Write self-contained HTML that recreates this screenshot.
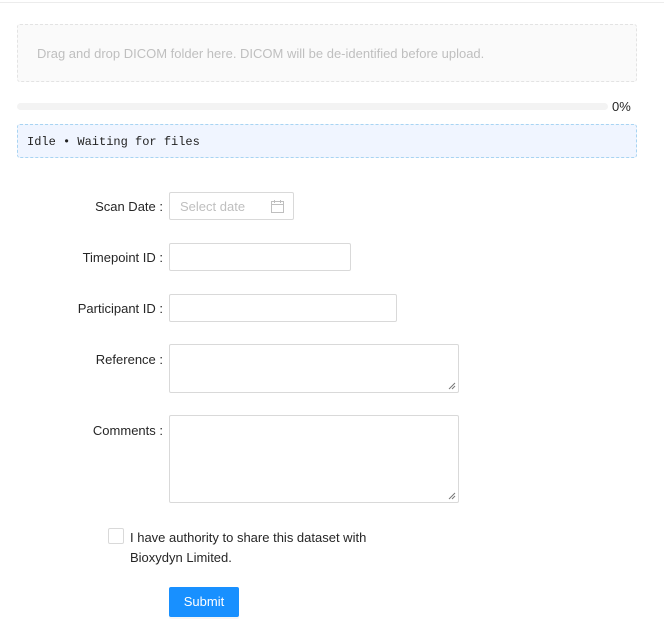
<!DOCTYPE html>
<html><head><meta charset="utf-8"><style>
*{box-sizing:border-box;margin:0;padding:0}
body{width:664px;height:638px;background:#fff;position:relative;font-family:"Liberation Sans",Arial,sans-serif;overflow:hidden}
.a{position:absolute}
.lbl{position:absolute;right:501px;font-size:13px;color:#262626;white-space:nowrap}
.inp{position:absolute;border:1px solid #d9d9d9;border-radius:2px;background:#fff}
.grip{position:absolute;right:2px;bottom:2px}
</style></head><body>
<div class="a" style="left:0;top:2px;width:664px;height:1px;background:#ececec"></div>
<div class="a" style="left:17px;top:24px;width:620px;height:58px;border:1px dashed #e3e3e3;border-radius:3px;background:#fafafa"></div>
<div class="a" style="left:37px;top:46px;font-size:13px;color:#bfbfbf">Drag and drop DICOM folder here. DICOM will be de-identified before upload.</div>
<div class="a" style="left:17px;top:103px;width:591px;height:7px;border-radius:4px;background:#f3f3f3"></div>
<div class="a" style="left:612px;top:99px;font-size:13px;color:#262626">0%</div>
<div class="a" style="left:17px;top:124px;width:620px;height:34px;border:1px dashed #a8d4f2;border-radius:3px;background:#f0f5ff"></div>
<div class="a" style="left:27px;top:135px;font-family:'Liberation Mono',monospace;font-size:12px;color:#222">Idle • Waiting for files</div>

<div class="lbl" style="top:199px">Scan Date :</div>
<div class="inp" style="left:169px;top:192px;width:125px;height:28px"></div>
<div class="a" style="left:180px;top:199px;font-size:13px;color:#bfbfbf">Select date</div>
<svg class="a" style="left:271px;top:200px" width="13" height="13" viewBox="0 0 13 13"><rect x="0.5" y="1.5" width="12" height="11" fill="none" stroke="#bfbfbf"/><line x1="0.5" y1="4.5" x2="12.5" y2="4.5" stroke="#bfbfbf"/><line x1="3.5" y1="0" x2="3.5" y2="3" stroke="#bfbfbf"/><line x1="9.5" y1="0" x2="9.5" y2="3" stroke="#bfbfbf"/></svg>

<div class="lbl" style="top:250px">Timepoint ID :</div>
<div class="inp" style="left:169px;top:243px;width:182px;height:28px"></div>
<div class="lbl" style="top:301px">Participant ID :</div>
<div class="inp" style="left:169px;top:294px;width:228px;height:28px"></div>
<div class="lbl" style="top:352px">Reference :</div>
<div class="inp" style="left:169px;top:344px;width:290px;height:49px"><svg class="grip" width="8" height="8"><path d="M7 1L1 7M7 4L4 7" stroke="#777" stroke-width="1"/></svg></div>
<div class="lbl" style="top:423px">Comments :</div>
<div class="inp" style="left:169px;top:415px;width:290px;height:88px"><svg class="grip" width="8" height="8"><path d="M7 1L1 7M7 4L4 7" stroke="#777" stroke-width="1"/></svg></div>

<div class="a" style="left:108px;top:528px;width:16px;height:16px;border:1px solid #d9d9d9;border-radius:2px"></div>
<div class="a" style="left:130px;top:528px;font-size:13px;line-height:20px;color:#262626">I have authority to share this dataset with<br>Bioxydyn Limited.</div>
<div class="a" style="left:169px;top:587px;width:70px;height:30px;background:#1890ff;border-radius:2px;color:#fff;font-size:13px;line-height:30px;text-align:center;box-shadow:0 2px 0 rgba(0,0,0,.04)">Submit</div>
</body></html>
